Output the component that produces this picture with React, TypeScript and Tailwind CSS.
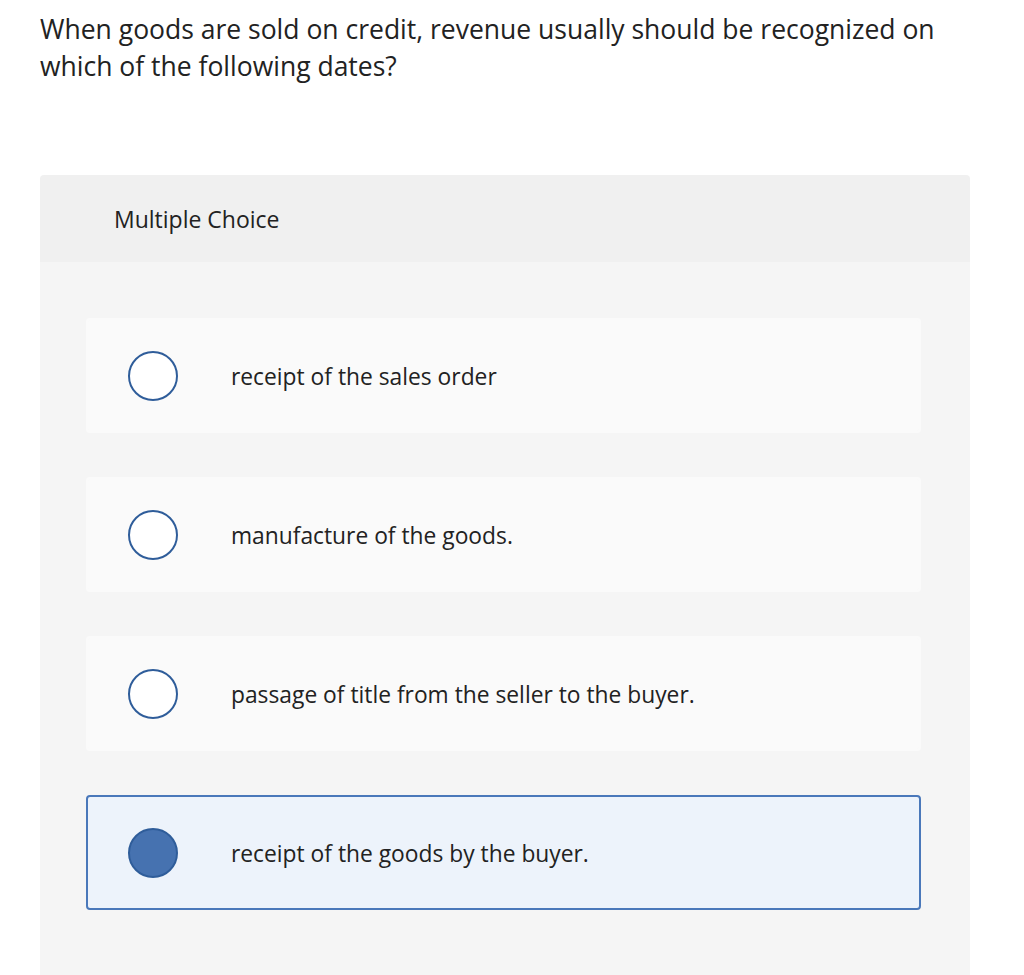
import React from "react";

const options = [
  { text: "receipt of the sales order", selected: false },
  { text: "manufacture of the goods.", selected: false },
  { text: "passage of title from the seller to the buyer.", selected: false },
  { text: "receipt of the goods by the buyer.", selected: true },
];

export default function App() {
  return (
    <div className="min-h-[975px] bg-white text-[#222] font-['Open_Sans','Noto_Sans',sans-serif]">
      <div className="pl-[40px] pt-[11px]">
        <p className="text-[26.5px] leading-[37px]">
          When goods are sold on credit, revenue usually should be recognized on
          <br />
          which of the following dates?
        </p>
      </div>
      <div className="ml-[40px] w-[930px] mt-[90px] rounded-t-[4px] overflow-hidden">
        <div className="h-[87px] bg-[#f0f0f0] flex items-center pl-[74px]">
          <span className="text-[23px] mt-[2px]">Multiple Choice</span>
        </div>
        <div className="bg-[#f5f5f5] pt-[56px] pb-[80px] pl-[46px] pr-[49px] flex flex-col gap-[44px]">
          {options.map((o, i) => (
            <div
              key={i}
              className={
                o.selected
                  ? "h-[115px] rounded-[4px] bg-[#edf3fb] border-2 border-[#4a78ba] flex items-center pl-[40px]"
                  : "h-[115px] rounded-[4px] bg-[#fafafa] border-2 border-[#fafafa] flex items-center pl-[40px]"
              }
            >
              <div
                className={
                  o.selected
                    ? "w-[50px] h-[50px] rounded-full bg-[#4672b0] border-2 border-[#2f5d9a] shrink-0"
                    : "w-[50px] h-[50px] rounded-full bg-white border-2 border-[#2f5d9a] shrink-0"
                }
              />
              <span className="ml-[53px] mt-[4px] text-[22.8px]">{o.text}</span>
            </div>
          ))}
        </div>
      </div>
    </div>
  );
}
